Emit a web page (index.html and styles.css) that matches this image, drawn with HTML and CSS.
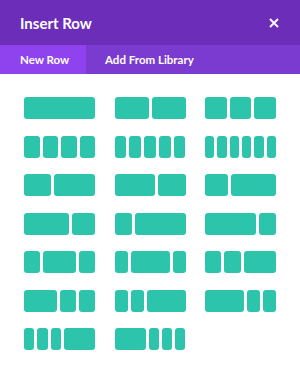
FILE: index.html
```html
<html>
	<head>
		<title>Insert Row</title>
		<link rel="stylesheet" href="styles.css">
	</head>
	<body>
		<div class="modal">
			<div class="modal-head">
				<span class="modal-title">Insert Row</span>
				<svg class="close" width="10" height="10" viewBox="0 0 10 10">
					<path d="M1 1 L9 9 M9 1 L1 9" stroke="#fff" stroke-width="1.8" fill="none"/>
				</svg>
			</div>
			<div class="tabs">
				<div class="tab active">New Row</div>
				<div class="tab">Add From Library</div>
			</div>
			<div class="layouts">
				<!-- flex-grow values are fractions of 60 -->
				<div class="layout"><span class="f60"></span></div>
				<div class="layout"><span class="f30"></span><span class="f30"></span></div>
				<div class="layout"><span class="f20"></span><span class="f20"></span><span class="f20"></span></div>

				<div class="layout"><span class="f15"></span><span class="f15"></span><span class="f15"></span><span class="f15"></span></div>
				<div class="layout"><span class="f12"></span><span class="f12"></span><span class="f12"></span><span class="f12"></span><span class="f12"></span></div>
				<div class="layout"><span class="f10"></span><span class="f10"></span><span class="f10"></span><span class="f10"></span><span class="f10"></span><span class="f10"></span></div>

				<div class="layout"><span class="f24"></span><span class="f36"></span></div>
				<div class="layout"><span class="f36"></span><span class="f24"></span></div>
				<div class="layout"><span class="f20"></span><span class="f40"></span></div>

				<div class="layout"><span class="f40"></span><span class="f20"></span></div>
				<div class="layout"><span class="f15"></span><span class="f45"></span></div>
				<div class="layout"><span class="f45"></span><span class="f15"></span></div>

				<div class="layout"><span class="f15"></span><span class="f30"></span><span class="f15"></span></div>
				<div class="layout"><span class="f12"></span><span class="f36"></span><span class="f12"></span></div>
				<div class="layout"><span class="f15"></span><span class="f15"></span><span class="f30"></span></div>

				<div class="layout"><span class="f30"></span><span class="f15"></span><span class="f15"></span></div>
				<div class="layout"><span class="f12"></span><span class="f12"></span><span class="f36"></span></div>
				<div class="layout"><span class="f36"></span><span class="f12"></span><span class="f12"></span></div>

				<div class="layout"><span class="f10"></span><span class="f10"></span><span class="f10"></span><span class="f30"></span></div>
				<div class="layout"><span class="f30"></span><span class="f10"></span><span class="f10"></span><span class="f10"></span></div>
			</div>
		</div>
	</body>
</html>
```

FILE: styles.css
```css
body {
  margin: 0;
  font-family: Lato, "Liberation Sans", sans-serif;
  background: #fff;
}

.modal {
  width: 300px;
  height: 373px;
  background: #fff;
}

/* Purple title bar */
.modal-head {
  height: 45px;
  background: #6c2eb9;
  display: flex;
  align-items: center;
  justify-content: space-between;
  padding: 0 21px 0 20px;
  box-sizing: border-box;
}

.modal-title {
  color: #fff;
  font-size: 15px;
  font-weight: 700;
}

.close {
  display: block;
}

/* Tabs */
.tabs {
  display: flex;
  height: 29px;
  background: #7b3bd0;
}

.tab {
  color: #fff;
  font-size: 11.5px;
  font-weight: 700;
  line-height: 29px;
  padding: 0 19px;
}

.tab.active {
  background: #8f43ee;
  width: 86px;
  box-sizing: border-box;
  padding: 0 0 0 20px;
}

/* Row layouts grid */
.layouts {
  display: grid;
  grid-template-columns: 1fr 1fr 1fr;
  column-gap: 19.5px;
  row-gap: 16.5px;
  padding: 23px 24px;
}

.layout {
  display: flex;
  gap: 3px;
  height: 22px;
}

.layout span {
  background: #2cc4aa;
  border-radius: 3px;
  flex-basis: 0;
}

.f10 { flex-grow: 10; }
.f12 { flex-grow: 12; }
.f15 { flex-grow: 15; }
.f20 { flex-grow: 20; }
.f24 { flex-grow: 24; }
.f30 { flex-grow: 30; }
.f36 { flex-grow: 36; }
.f40 { flex-grow: 40; }
.f45 { flex-grow: 45; }
.f60 { flex-grow: 60; }
```
